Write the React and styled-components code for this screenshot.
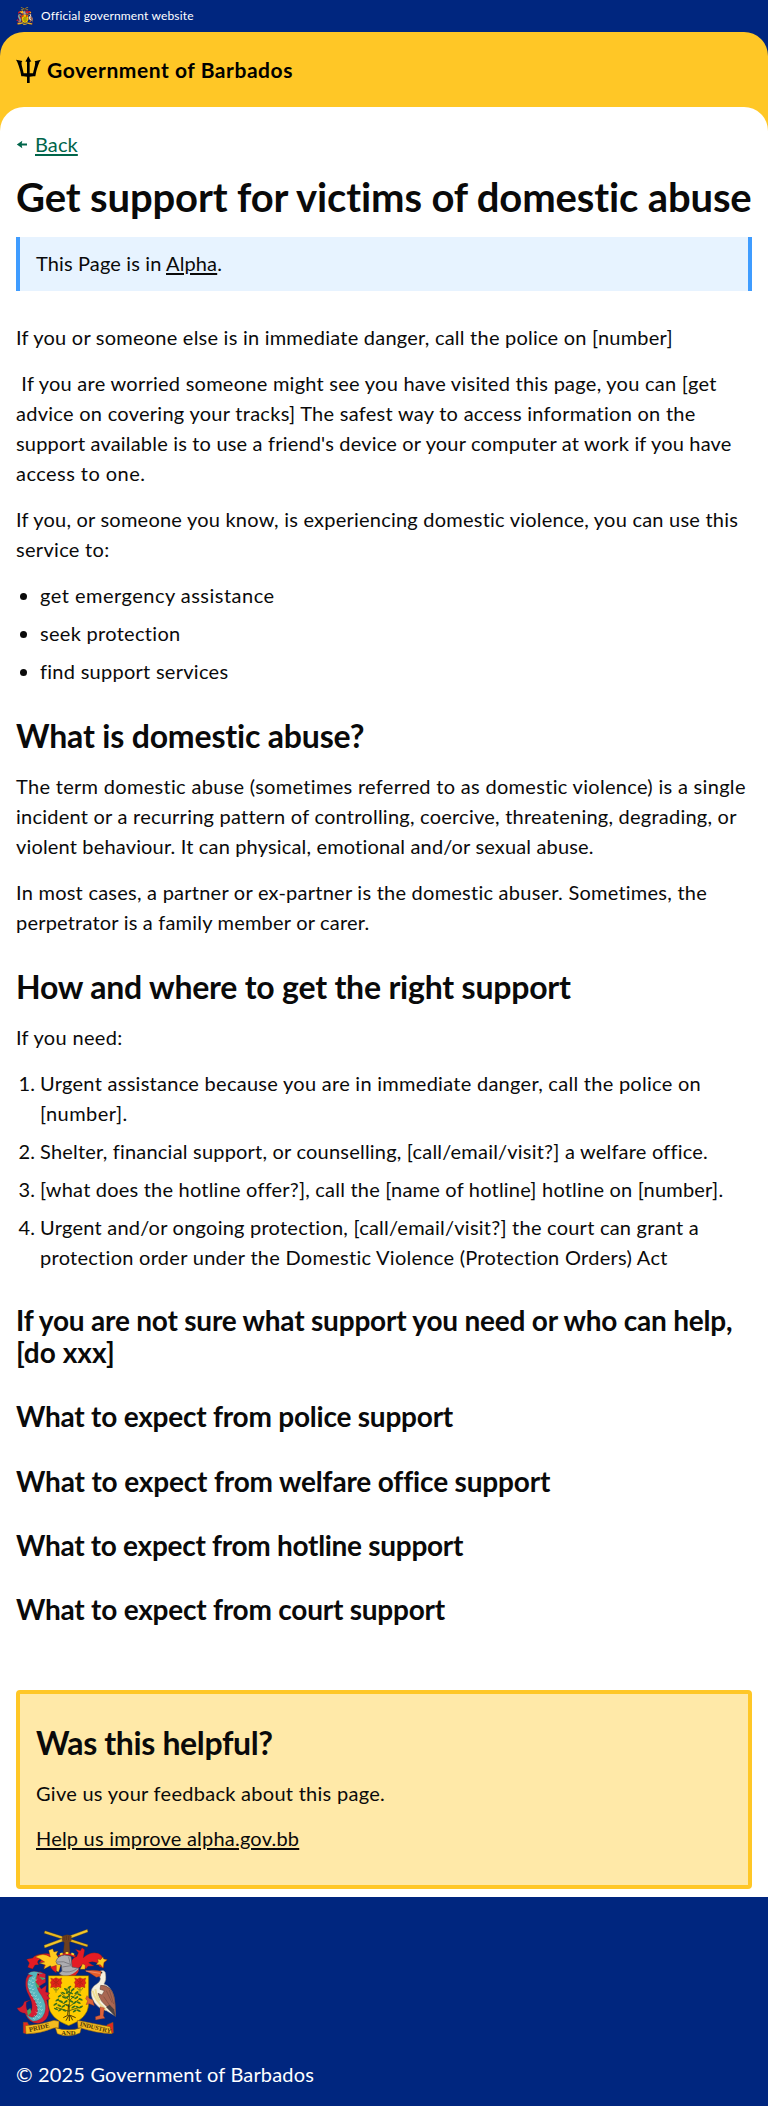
import React from "react";
import styled, { createGlobalStyle } from "styled-components";

const GlobalStyle = createGlobalStyle`
  *, *::before, *::after { box-sizing: border-box; }
  body {
    margin: 0;
    background: #fff;
    color: #0a0a0a;
    font: 400 20px/30px Lato, "Open Sans", sans-serif;
  }
  h1, h2, h3, p, ul, ol { margin: 0; }
`;

/* One set line of copy; $track is its letter spacing in pixels. */
const Line = styled.span`
  display: block;
  width: max-content;
  white-space: pre;
  letter-spacing: ${({ $track = 0 }) => $track}px;
`;

const Page = styled.div`
  background: #00267f;
`;

const TopBar = styled.div`
  display: flex;
  align-items: center;
  gap: 8px;
  height: 32px;
  padding: 0 16px;
  color: #fff;
  font-size: 12px;
  line-height: 16px;
`;

const Header = styled.header`
  display: flex;
  gap: 6px;
  padding: 24px 16px 47px;
  border-radius: 24px 24px 0 0;
  background: #ffc726;
  color: #000;
  font-size: 21px;
  font-weight: 700;
  line-height: 28px;
`;

const Main = styled.main`
  margin-top: -24px;
  padding: 22px 16px 8px;
  border-radius: 24px 24px 0 0;
  background: #fff;
`;

const BackRow = styled.div`
  display: flex;
  align-items: center;
  gap: 7px;
  color: #00654a;
`;

const Link = styled.a`
  color: inherit;
  text-decoration: underline;
  text-decoration-thickness: ${({ $thickness = 1.5 }) => $thickness}px;
  text-underline-offset: 2px;
`;

const Title = styled.h1`
  margin-top: 15px;
  font-size: 40px;
  line-height: 46px;
`;

const Alert = styled.div`
  margin-top: 17px;
  padding: 11px 16px 13px;
  border: solid #3f9cff;
  border-width: 0 4px;
  background: #e7f3ff;
`;

const Article = styled.article`
  margin-top: 31px;
  p + p, p + ul, p + ol { margin-top: 16px; }
`;

const SectionHeading = styled.h2`
  margin: 31px 0 17px;
  font-size: 32px;
  line-height: 37px;
`;

const SubHeading = styled.h3`
  margin-top: 32px;
  font-size: 28px;
  line-height: 32.2px;
`;

const List = styled.ul`
  padding-left: 24px;
  li + li { margin-top: 8px; }
`;

const Feedback = styled.section`
  margin-top: 64.8px;
  padding: 30px 16px 32px;
  border: 4px solid #ffc726;
  border-radius: 4px;
  background: #ffe9a8;
  h2 { margin-top: 0; }
  p + p { margin-top: 15px; }
`;

const Footer = styled.footer`
  display: flex;
  flex-direction: column;
  gap: 22px;
  padding: 32px 16px 17px;
  color: #fff;
`;

const Icon = styled.svg`
  display: block;
  flex: none;
`;

function Trident() {
  return (
    <Icon width="25" height="28" viewBox="0 0 75 84" fill="#000">
      <path d="M37 1 L46 17 Q42 16 41 18 V52 H51 L57 27 Q59 18 56 16 L75 11 Q68 18 66 29 Q60 45 58 61 Q49 60 41 62 V81 H33 V62 Q25 60 16 61 Q14 45 8 29 Q5 18 0 11 L19 15 Q15 18 17 27 L23 52 H33 V18 Q32 16 28 17 Z" />
    </Icon>
  );
}

function BackArrow() {
  return (
    <Icon width="12" height="9" viewBox="0 0 12 9" fill="#00654a">
      <path d="M0.8 4.5 L6.3 0.7 L5.7 3.6 H11 V5.4 H5.7 L6.3 8.3 Z" />
    </Icon>
  );
}

const leafBranches = [
  [208, 290, 208, 378], [208, 350, 172, 330], [208, 350, 240, 326], [208, 364, 168, 352],
  [208, 362, 244, 350], [207, 330, 182, 308], [208, 332, 236, 306], [208, 318, 196, 298], [208, 316, 220, 296],
];
const leaves = [
  [208, 292], [198, 298], [218, 299], [190, 309], [203, 307], [213, 309], [229, 308], [238, 314],
  [179, 318], [192, 322], [202, 321], [218, 321], [229, 323], [242, 328], [172, 330], [183, 334],
  [197, 335], [214, 334], [224, 338], [236, 338], [166, 343], [178, 347], [190, 349], [203, 346],
  [220, 351], [232, 351], [243, 351], [168, 357], [180, 360], [193, 361], [224, 363], [236, 362],
];
const scales = [
  [100, 263], [108, 268], [91, 270], [99, 275], [88, 281], [96, 285], [90, 293], [99, 296], [93, 304],
  [102, 307], [97, 315], [107, 316], [103, 325], [113, 326], [109, 335], [119, 336], [112, 345],
  [122, 347], [115, 356], [125, 358], [111, 366], [121, 369], [107, 376], [116, 379], [103, 384],
];

function CoatOfArms({ width, height, motto }) {
  return (
    <Icon width={width} height={height} viewBox="48 117 300 324" strokeLinejoin="round">
      <g stroke="#4b3510" strokeWidth="1">
        <path d="M135 122 L264 164 L262 171 L132 130Z" fill="#e8b71e" />
        <path d="M262 118 L264 126 L134 174 L132 166Z" fill="#f2c62a" />
        <path d="M187 139 Q200 130 214 138 L214 151 L208 158 L210 190 H190 L193 158 L186 151Z" fill="#6d3f20" />
        <path d="M192 140 V151 M199 137 V150 M206 138 V151" stroke="#341b0b" fill="none" />
      </g>
      <g stroke="#5b2410" strokeWidth="1">
        <path d="M183 218 Q163 188 132 191 Q107 192 98 204 L80 208 L88 219 L83 232 L98 237 L105 225 L116 224 Q106 209 127 207 L118 218 L136 217 L131 233 L148 223 L158 235 L178 240Z" fill="#e51b24" />
        <path d="M178 207 L169 193 L174 183 L162 186 L158 176 L146 181 L151 201 Q130 186 105 201 Q119 204 134 216 L117 219 L136 225 L131 238 L151 227 L160 240 L176 246 L182 226Z" fill="#ffc91f" />
        <path d="M211 219 Q221 199 230 200 L235 188 L226 178 L241 182 L246 173 L254 179 L250 203 Q271 184 294 190 Q307 195 308 206 L322 209 L312 219 L311 234 L299 230 L290 218 Q275 213 266 218 L283 228 L264 229 L258 237 L247 225 L235 235 L214 238Z" fill="#e51b24" />
        <path d="M293 207 L302 209 L309 200 L311 207 L322 209 L312 217 L309 234 L301 224 L288 224 L295 216Z M240 238 L248 221 L256 226 L255 238Z" fill="#ffc91f" />
        <path d="M151 232 L169 226 L169 249 L159 241Z" fill="#e51b24" />
      </g>
      <path d="M174 196 Q200 181 227 196 L225 203 Q200 189 177 203Z" fill="#d8201e" stroke="#6a1812" />
      <path d="M180 193 l8 -3 M197 189 l8 0 M214 190 l8 4" stroke="#ffd42a" strokeWidth="6" />
      <path d="M168 214 Q173 197 194 195 L213 199 L216 231 L237 235 Q232 254 207 263 Q190 264 177 250 L186 243 L184 225 L171 222Z" fill="#adadb1" stroke="#55545a" strokeWidth="2" />
      <path d="M171 216 Q190 211 211 223 M187 231 L213 227 M187 244 Q209 250 230 237 M206 201 L212 226" fill="none" stroke="#68676d" strokeWidth="2" />
      <path d="M176 251 Q200 272 238 236 Q233 260 207 263 Q188 264 176 251Z" fill="#d82225" />

      <path d="M145 257 H266 V345 Q263 386 206 407 Q149 386 145 345Z" fill="#ffcc00" stroke="#654e0b" strokeWidth="1.5" />
      {[168, 240].map((x) => (
        <g key={x}>
          <path d={`M${x - 16} 264 l8 3 l8 -4 l9 4 l8 -3 l-2 9 l3 6 l-4 5 l1 9 l-9 -3 l-7 4 l-7 -3 l-8 2 l2 -9 l-3 -7 l4 -5Z`} fill="#e22418" stroke="#8f2510" />
          <path d={`M${x - 9} 271 l7 6 l-7 7 M${x + 9} 271 l-7 6 l7 7 M${x} 266 v22`} fill="none" stroke="#9f2311" strokeWidth="2" />
          <path d={`M${x - 8} 293 q4 12 8 6 q4 6 9 -6 M${x} 293 v15`} fill="none" stroke="#7b8018" strokeWidth="2.5" />
        </g>
      ))}
      <g stroke="#3d4b12" strokeWidth="2.4">
        {leafBranches.map(([x1, y1, x2, y2]) => <line key={`${x2}-${y2}`} x1={x1} y1={y1} x2={x2} y2={y2} />)}
      </g>
      {leaves.map(([x, y], i) => (
        <ellipse key={`${x}-${y}`} cx={x} cy={y} rx="6.8" ry="2.7" fill="#35701c" transform={`rotate(${i % 2 ? 24 : -34} ${x} ${y})`} />
      ))}
      <path d="M206 343 L203 376 L190 383 M207 375 L198 392 M208 375 L208 393 M210 375 L218 391 M211 376 L227 383" fill="none" stroke="#49360c" strokeWidth="3" />

      <g stroke="#6f1720" strokeWidth="1">
        <path d="M99 250 Q78 249 77 278 Q76 299 86 315 Q98 338 96 354 Q92 372 82 361 Q77 353 79 337 L91 330 L73 335 Q68 354 51 354 Q58 369 75 370 Q87 401 116 400 Q146 393 147 362 L140 330 L150 326 L142 317 L149 309 L137 306 L139 286 L124 297 L118 289 L137 277 L136 252 L121 245Z" fill="#d51e32" />
        <path d="M83 252 Q93 241 111 245 L127 250 L136 266 L121 273 L112 280 Q108 296 124 316 Q143 345 134 369 Q125 393 99 394 Q82 385 79 373 Q98 391 111 372 Q118 350 99 323 Q72 287 88 261 L98 257Z" fill="#55b5bd" />
      </g>
      <path d="M111 253 Q126 257 132 266 L119 275 L116 295 L108 289 L105 270Z" fill="#4aa660" />
      <path d="M112 250 L136 253 L134 264 L117 260 L135 278 L120 276 L116 287 L107 276Z" fill="#d51e32" />
      {scales.map(([x, y]) => <path key={`${x}-${y}`} d={`M${x - 4} ${y} q4 7 8 0`} fill="none" stroke="#d7f0ea" strokeWidth="1.6" />)}
      <path d="M81 362 L91 354 L94 367 L84 378Z" fill="#4aa660" />
      <circle cx="115" cy="254" r="2" fill="#151515" />

      <path d="M298 244 Q316 237 317 253 Q320 270 312 282 Q333 288 342 320 L347 379 L319 362 L303 357 Q278 339 274 316 Q270 293 290 282 Q306 270 299 260Z" fill="#f5f0df" stroke="#8d8174" strokeWidth="1.5" />
      <path d="M255 242 Q282 238 304 244 L301 259 L289 262 Q272 248 255 242Z" fill="#e45c2a" stroke="#8f3519" />
      <path d="M258 243 L300 250" stroke="#f3a083" strokeWidth="2" />
      <circle cx="305" cy="248" r="2.2" fill="#1d1b19" />
      <path d="M302 286 Q318 284 332 298 Q348 316 347 379 L326 353 Q300 336 294 310 L306 315 L313 302 L300 298Z" fill="#a96752" stroke="#573931" strokeWidth="1.5" />
      <path d="M319 302 L336 338 M328 300 L341 342 M311 320 L336 356" stroke="#7d4b3e" strokeWidth="2" />
      <path d="M278 302 Q284 332 318 359 M286 297 Q289 319 300 333" fill="none" stroke="#eddc94" strokeWidth="6" />
      <path d="M318 351 L347 381 L342 358 L329 344Z" fill="#4c4242" />
      <path d="M300 350 L313 354 L310 377 L315 385 L301 387 L287 390 L286 380 L300 376Z M278 329 L267 325 L261 317 L257 326 L263 333 L258 344 L268 341 L283 347Z" fill="#dc623b" stroke="#823119" />

      <g stroke="#8b5a0b" strokeWidth="1.5">
        <path d="M70 397 L82 397 L87 407 L77 412 L82 431 L70 429Z M339 397 L322 404 L318 411 L332 411 L327 431 L340 429Z" fill="#e32822" />
        <path d="M76 407 Q120 405 162 391 L177 394 L176 414 L162 414 Q119 432 78 432Z M232 391 Q280 401 330 410 L336 431 Q288 430 242 414 L234 414Z" fill="#f3bb20" />
        <path d="M166 413 Q205 426 244 413 L240 429 Q207 445 172 431Z" fill="#ffc91f" />
      </g>
      {motto && (
        <g fill="#4d3509" fontFamily="Liberation Serif, serif" fontWeight="700" fontSize="20" textAnchor="middle">
          <text x="119" y="419" transform="rotate(-13 119 419)" textLength="62">PRIDE</text>
          <text x="205" y="434" textLength="43">AND</text>
          <text x="285" y="419" transform="rotate(13 285 419)" textLength="96" fontSize="19">INDUSTRY</text>
        </g>
      )}
    </Icon>
  );
}

export default function App() {
  return (
    <Page>
      <GlobalStyle />
      <TopBar>
        <CoatOfArms width={17} height={18} />
        <Line $track={0.151}>Official government website</Line>
      </TopBar>
      <Header>
        <Trident />
        <Line $track={0.55}>Government of Barbados</Line>
      </Header>
      <Main>
        <BackRow>
          <BackArrow />
          <Link href="#" $thickness={2}><Line $track={0.1}>Back</Line></Link>
        </BackRow>
        <Title><Line $track={-0.135}>Get support for victims of domestic abuse</Line></Title>
        <Alert>
          <Line $track={0.13}>This Page is in <Link href="#">Alpha</Link>.</Line>
        </Alert>
        <Article>
          <p><Line $track={0.23}>If you or someone else is in immediate danger, call the police on [number]</Line></p>
          <p>
            <Line $track={0.255}>{"\u00a0If you are worried someone might see you have visited this page, you can [get"}</Line>
            <Line $track={0.275}>advice on covering your tracks] The safest way to access information on the</Line>
            <Line $track={0.178}>support available is to use a friend's device or your computer at work if you have</Line>
            <Line $track={0.45}>access to one.</Line>
          </p>
          <p>
            <Line $track={0.221}>If you, or someone you know, is experiencing domestic violence, you can use this</Line>
            <Line $track={0.305}>service to:</Line>
          </p>
          <List>
            <li><Line $track={0.48}>get emergency assistance</Line></li>
            <li><Line $track={0.3}>seek protection</Line></li>
            <li><Line $track={0.27}>find support services</Line></li>
          </List>
          <SectionHeading><Line $track={-0.18}>What is domestic abuse?</Line></SectionHeading>
          <p>
            <Line $track={0.307}>The term domestic abuse (sometimes referred to as domestic violence) is a single</Line>
            <Line $track={0.234}>incident or a recurring pattern of controlling, coercive, threatening, degrading, or</Line>
            <Line $track={0.163}>violent behaviour. It can physical, emotional and/or sexual abuse.</Line>
          </p>
          <p>
            <Line $track={0.24}>In most cases, a partner or ex-partner is the domestic abuser. Sometimes, the</Line>
            <Line $track={0.2}>perpetrator is a family member or carer.</Line>
          </p>
          <SectionHeading><Line $track={-0.215}>How and where to get the right support</Line></SectionHeading>
          <p><Line $track={0.318}>If you need:</Line></p>
          <List as="ol">
            <li>
              <Line $track={0.276}>Urgent assistance because you are in immediate danger, call the police on</Line>
              <Line $track={0.44}>[number].</Line>
            </li>
            <li><Line $track={0.205}>Shelter, financial support, or counselling, [call/email/visit?] a welfare office.</Line></li>
            <li><Line $track={0.207}>[what does the hotline offer?], call the [name of hotline] hotline on [number].</Line></li>
            <li>
              <Line $track={0.235}>Urgent and/or ongoing protection, [call/email/visit?] the court can grant a</Line>
              <Line $track={0.275}>protection order under the Domestic Violence (Protection Orders) Act</Line>
            </li>
          </List>
          <SubHeading>
            <Line $track={-0.205}>If you are not sure what support you need or who can help,</Line>
            <Line $track={0.02}>[do xxx]</Line>
          </SubHeading>
          <SubHeading><Line $track={-0.225}>What to expect from police support</Line></SubHeading>
          <SubHeading><Line $track={-0.163}>What to expect from welfare office support</Line></SubHeading>
          <SubHeading><Line $track={-0.29}>What to expect from hotline support</Line></SubHeading>
          <SubHeading><Line $track={-0.225}>What to expect from court support</Line></SubHeading>
        </Article>
        <Feedback>
          <SectionHeading><Line $track={-0.36}>Was this helpful?</Line></SectionHeading>
          <p><Line $track={0.278}>Give us your feedback about this page.</Line></p>
          <p><Link href="#"><Line $track={0.21}>Help us improve alpha.gov.bb</Line></Link></p>
        </Feedback>
      </Main>
      <Footer>
        <CoatOfArms width={100} height={108} motto />
        <Line $track={0.159}>© 2025 Government of Barbados</Line>
      </Footer>
    </Page>
  );
}
